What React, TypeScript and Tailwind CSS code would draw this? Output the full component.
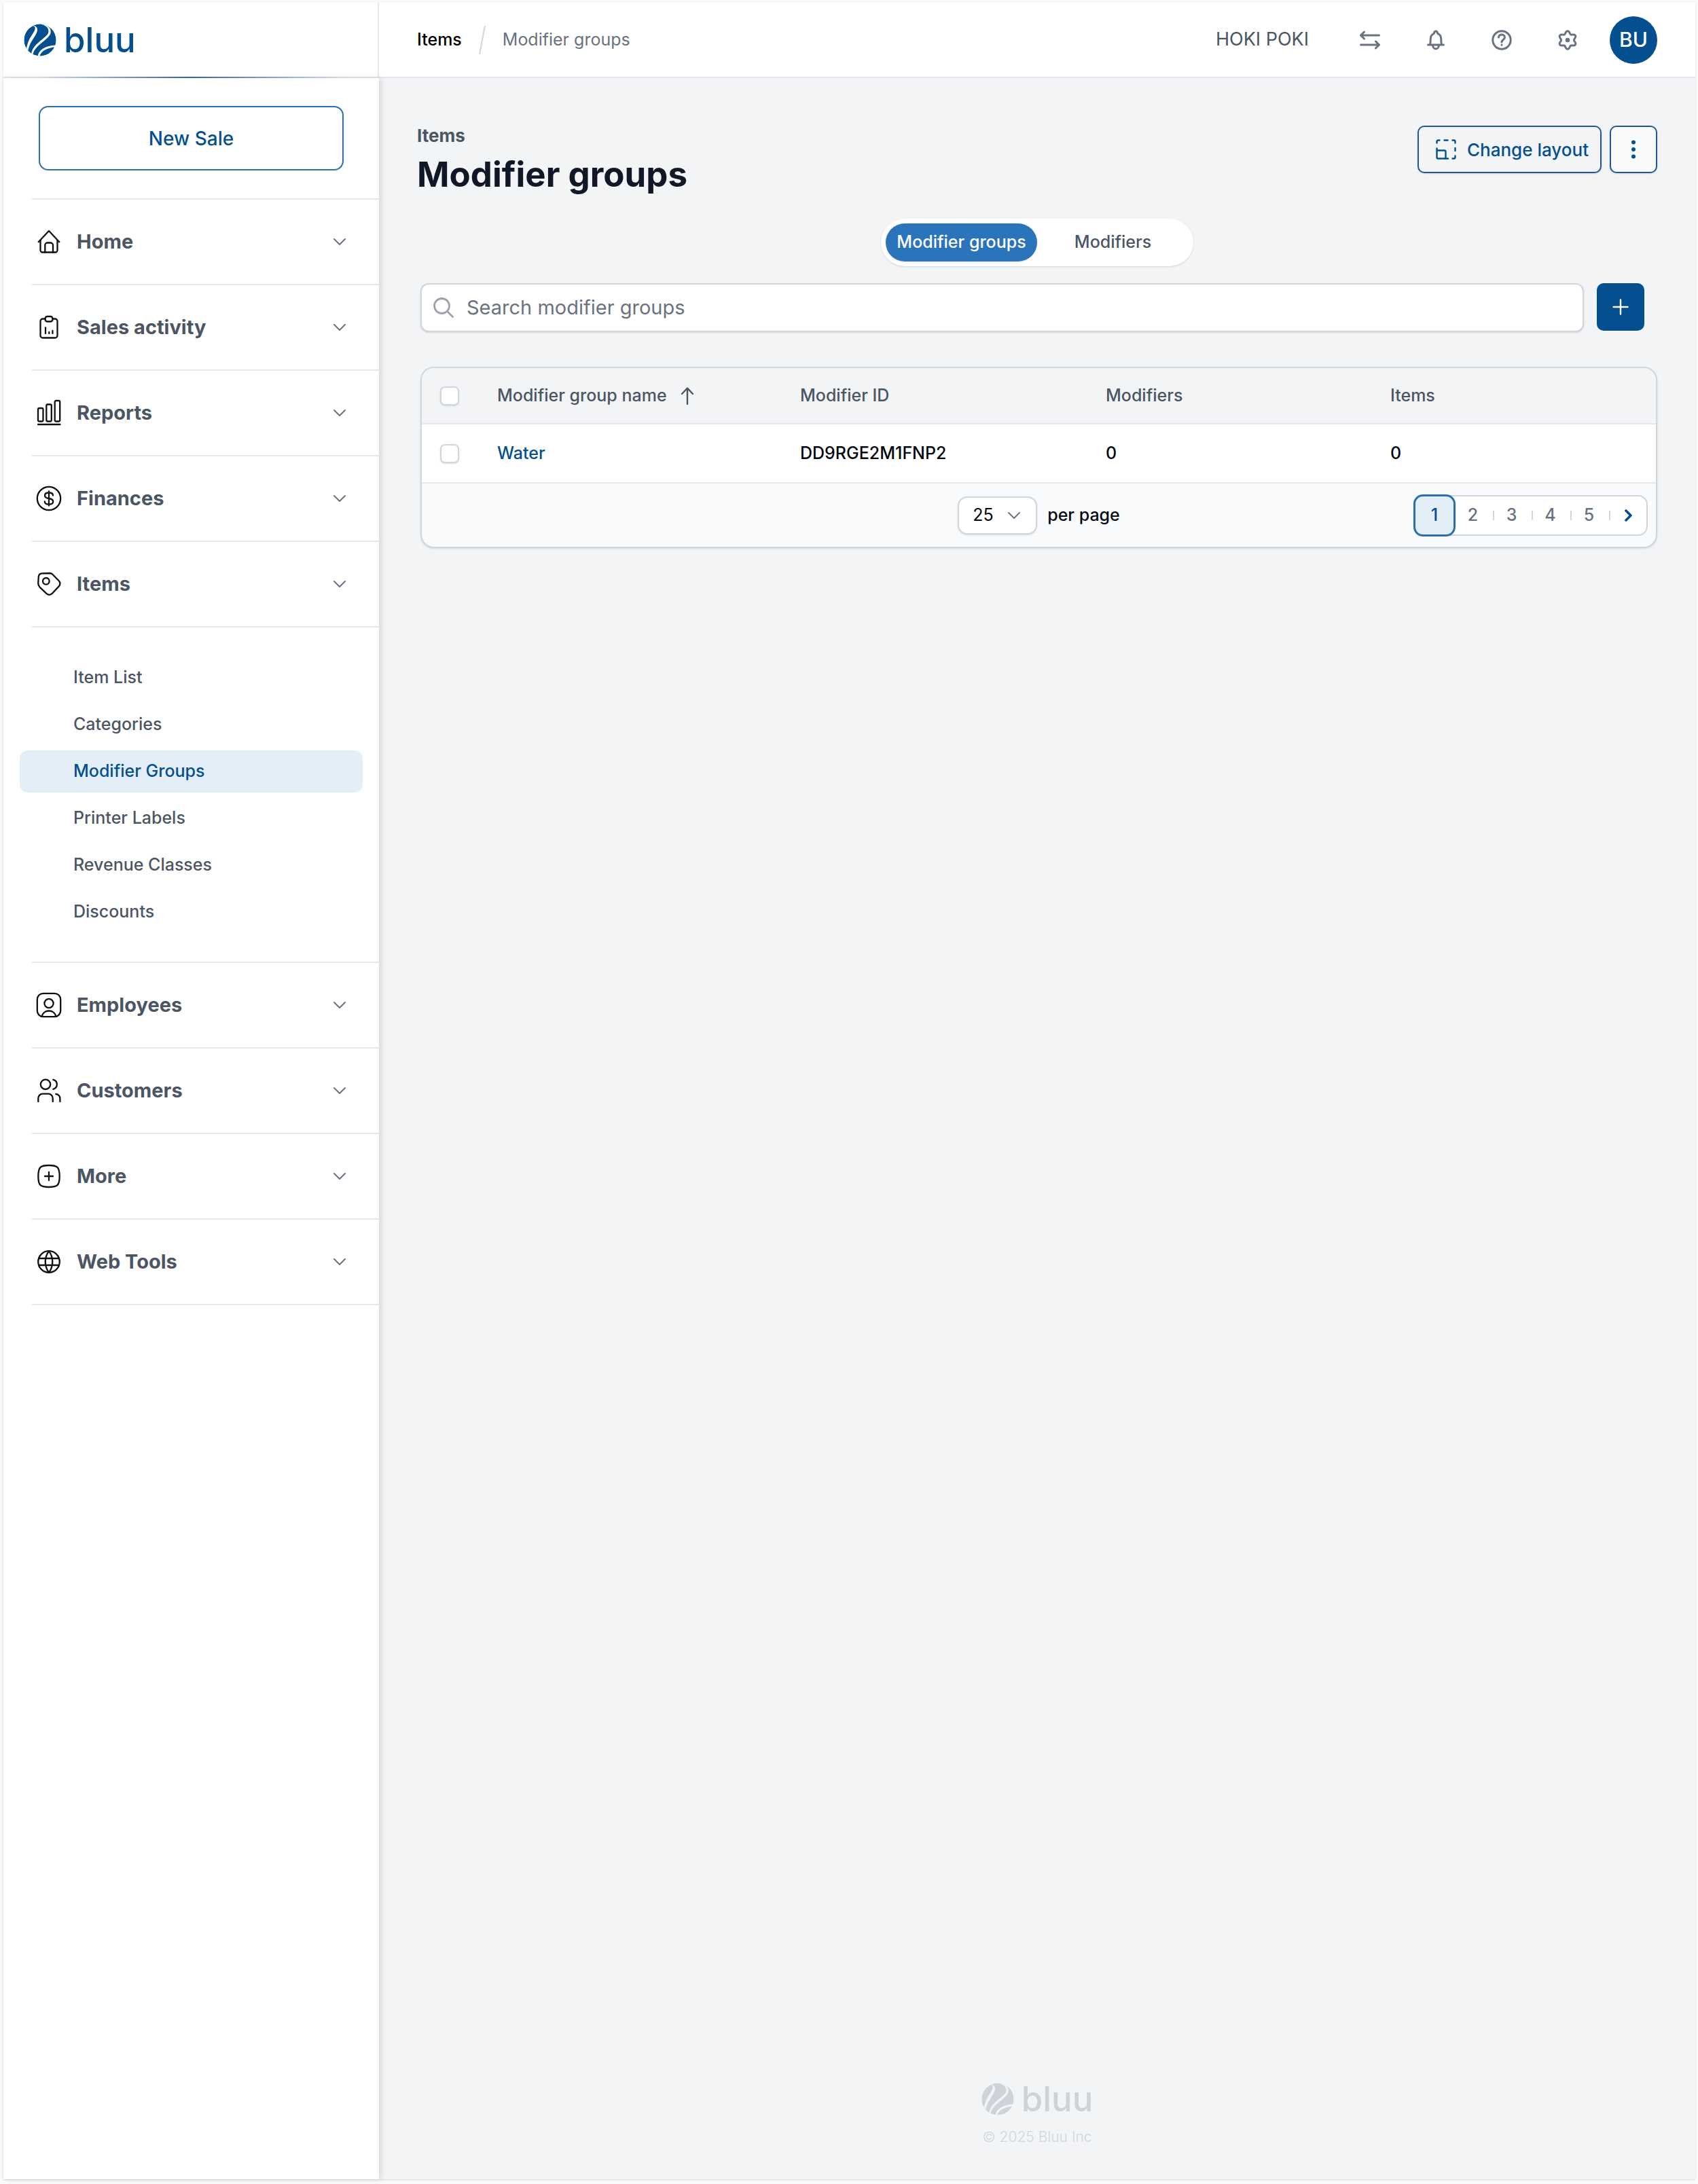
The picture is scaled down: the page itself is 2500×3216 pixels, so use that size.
import type { ReactNode } from "react";

interface NavSection {
  label: string;
  icon: ReactNode;
  children?: { label: string; active?: boolean }[];
}

const NAV: NavSection[] = [
  {
    label: "Home",
    icon: (
      <>
        <path d="M2.7 18.2L18 2l15.3 16.2" />
        <path d="M5.5 16v14.5a3 3 0 0 0 3 3h19a3 3 0 0 0 3-3V16" />
        <path d="M12.3 33.5V23a3.5 3.5 0 0 1 3.5-3.5h4.6A3.5 3.5 0 0 1 24 23v10.5" />
      </>
    ),
  },
  {
    label: "Sales activity",
    icon: (
      <>
        <path d="M12.5 5.5H9A3.5 3.5 0 0 0 5.5 9v21A3.5 3.5 0 0 0 9 33.500h18a3.5 3.5 0 0 0 3.5-3.5V9A3.5 3.5 0 0 0 27 5.5h-3.5" />
        <rect x="12.5" y="2" width="11" height="7.5" rx="3.2" />
        <path d="M13 18.5V27M18.3 25v2M23.4 23v4" />
      </>
    ),
  },
  {
    label: "Reports",
    icon: (
      <>
        <rect x="2" y="11" width="7.5" height="19.5" rx="2" />
        <rect x="14.3" y="5.5" width="7.5" height="25" rx="2" />
        <rect x="26.7" y="0" width="7.5" height="30.5" rx="2" />
        <path d="M2 35h32.5" />
      </>
    ),
  },
  {
    label: "Finances",
    icon: (
      <>
        <circle cx="18" cy="18" r="17.2" />
        <path d="M18 7.5v21M24 13.5c0-2.5-2.3-4-6-4s-6 1.5-6 4.2c0 2.8 2.5 3.7 6 4.3s6.2 1.6 6.2 4.4c0 2.6-2.5 4.2-6.2 4.2s-6.2-1.6-6.2-4.2" />
      </>
    ),
  },
  {
    label: "Items",
    icon: (
      <>
        <path d="M7.5 2.4L19 2q2.500 0 4.3 1.7l9.4 9.5q3.6 4 0 8.2L22.5 32.2q-4 3.3-8 0L4.3 22.3Q2.300 20 2.2 17l.6-10Q3.2 3 7.5 2.4z" />
        <circle cx="13.8" cy="13.8" r="4.8" />
      </>
    ),
    children: [
      { label: "Item List" },
      { label: "Categories" },
      { label: "Modifier Groups", active: true },
      { label: "Printer Labels" },
      { label: "Revenue Classes" },
      { label: "Discounts" },
    ],
  },
  {
    label: "Employees",
    icon: (
      <>
        <rect x="0.8" y="0.8" width="34.4" height="34.4" rx="9" />
        <circle cx="18" cy="15.5" r="6.6" />
        <path d="M7.8 34.5C8.8 29.5 13 26.5 18 26.5s9.2 3 10.2 8" />
      </>
    ),
  },
  {
    label: "Customers",
    icon: (
      <>
        <circle cx="13" cy="8.8" r="7.2" />
        <path d="M24.3 1.8a7.2 7.2 0 0 1 0 14" />
        <path d="M2.3 34.2v-5a6.5 6.5 0 0 1 6.5-6.5h8.4a6.5 6.5 0 0 1 6.5 6.5v5" />
        <path d="M28.4 23a6.5 6.5 0 0 1 6 6.5v4.7" />
      </>
    ),
  },
  {
    label: "More",
    icon: (
      <>
        <path d="M2.3 18C2.3 5 5 2 18 2s15.7 3 15.7 16S31 34 18 34 2.3 31 2.3 18z" />
        <path d="M18 12v12M12 18h12" />
      </>
    ),
  },
  {
    label: "Web Tools",
    icon: (
      <>
        <circle cx="18" cy="18" r="15.8" />
        <path d="M18 2.2c-7 9.5-7 22 0 31.6M18 2.2c7 9.5 7 22 0 31.6M3.2 13h29.6M3.2 23h29.6" />
      </>
    ),
  },
];

const COLUMNS = ["Modifier ID", "Modifiers", "Items"];

const ROWS = [{ name: "Water", id: "DD9RGE2M1FNP2", modifiers: 0, items: 0 }];

const PAGES = [2, 3, 4, 5];

// six-lobed outline of the settings icon
const GEAR = Array.from({ length: 90 }, (_, i) => {
  const a = (i / 90) * Math.PI * 2;
  const r = 11.3 + 2 * Math.cos(6 * a);
  return `${(15 + r * Math.sin(a)).toFixed(2)},${(15 - r * Math.cos(a)).toFixed(2)}`;
}).join(" ");

function Logo({ className }: { className: string }) {
  return (
    <div className={`flex items-center gap-[11px] ${className}`}>
      <svg width="48" height="48" viewBox="0 0 144 144" fill="none" aria-hidden="true">
        <defs>
          <mask id="ball">
            <circle cx="72" cy="72" r="71" fill="#fff" />
            <path d="M32 11C44 8 53 12 49 26C45 42 20 62 12 108L19 118C26 78 58 52 60 28C61 12 48 5 32 11z" fill="#000" />
            <path d="M74 1C98 8 112 18 109 38C104 62 40 84 33 134L40 138C46 94 112 72 119 40C122 20 108 6 74 1z" fill="#000" />
            <path d="M143 95C100 94 66 114 62 142L70 144C76 120 104 106 141 103z" fill="#000" />
          </mask>
        </defs>
        <circle cx="72" cy="72" r="71" fill="currentColor" mask="url(#ball)" />
      </svg>
      <span className="text-[51px] leading-[48px] font-medium">bluu</span>
    </div>
  );
}

function Chevron({ className }: { className: string }) {
  return (
    <svg width="20" height="12" viewBox="0 0 20 12" fill="none" stroke="currentColor" strokeWidth="2" strokeLinecap="round" strokeLinejoin="round" className={className} aria-hidden="true">
      <path d="M2 2l8 8 8-8" />
    </svg>
  );
}

function HeaderButton({ label, children }: { label: string; children: ReactNode }) {
  return (
    <button type="button" aria-label={label} className="flex size-[70px] items-center justify-center text-gray-500">
      <svg width="30" height="30" viewBox="0 0 30 30" fill="none" stroke="currentColor" strokeWidth="3" strokeLinecap="round" strokeLinejoin="round">
        {children}
      </svg>
    </button>
  );
}

function Sidebar() {
  return (
    <aside className="flex w-[553px] shrink-0 flex-col">
      <div className="flex h-[111px] items-center border-r-2 border-b-2 border-gray-200 pl-[30px]">
        <Logo className="text-[#034f8f]" />
      </div>
      <div className="relative z-10 flex-1 bg-white shadow-[3px_0_8px_rgba(0,0,0,0.12)]">
        <div className="absolute inset-x-[50px] -top-[2px] h-[2px] bg-gradient-to-r from-transparent via-[#3563ad] to-transparent" />
        <div className="px-[52px] py-[41px]">
          <button type="button" className="h-[95px] w-full rounded-[14px] border-2 border-[#2c6fb0] text-[28px] font-medium text-[#034f8f]">
            New Sale
          </button>
        </div>
        <nav className="ml-[42px] border-t-2 border-gray-200">
          {NAV.map((section) => (
            <div key={section.label}>
              <button type="button" className="flex h-[126px] w-full items-center border-b-2 border-gray-200 pr-[48px] pl-[7px] text-left">
                <svg width="36" height="36" viewBox="0 0 36 36" fill="none" stroke="#111" strokeWidth="2.3" strokeLinecap="round" strokeLinejoin="round" className="overflow-visible" aria-hidden="true">
                  {section.icon}
                </svg>
                <span className="ml-[23px] flex-1 text-[29px] font-bold text-[#4b5563]">{section.label}</span>
                <Chevron className="text-gray-500" />
              </button>
              {section.children && (
                <ul className="flex flex-col gap-[7px] border-b-2 border-gray-200 pt-[43px] pb-[42px]">
                  {section.children.map((item) => (
                    <li key={item.label} className="-ml-[18px] pr-6">
                      <a
                        href="#"
                        className={`flex h-[62px] items-center rounded-[12px] pl-[79px] text-[25px] font-medium ${
                          item.active ? "bg-[#e4eef8] text-[#034f8f]" : "text-[#4b5563]"
                        }`}
                      >
                        {item.label}
                      </a>
                    </li>
                  ))}
                </ul>
              )}
            </div>
          ))}
        </nav>
      </div>
    </aside>
  );
}

function TopBar() {
  return (
    <header className="flex h-[111px] items-center justify-between border-b-2 border-gray-200 bg-white px-[56px]">
      <nav aria-label="Breadcrumb" className="flex items-center text-[25px] font-medium">
        <a href="#" className="text-black">
          Items
        </a>
        <svg width="10" height="42" viewBox="0 0 10 42" fill="none" stroke="#d1d5db" strokeWidth="2" className="mx-[25px]" aria-hidden="true">
          <path d="M9 0L1 42" />
        </svg>
        <span className="font-normal text-gray-500">Modifier groups</span>
      </nav>
      <div className="flex items-center gap-[27px]">
        <span className="mr-7 text-[27px] text-[#4b5563]">HOKI POKI</span>
        <HeaderButton label="Switch account">
          <path d="M28.500 8H2M6.5 3l-5 5 5 5M1.500 22H28M23.5 17l5 5-5 5" />
        </HeaderButton>
        <HeaderButton label="Notifications">
          <path d="M3.5 22h23M6.3 22c.9-2 .9-4.5.9-8.5 0-4.5 2.3-7 5.2-8.2C12.500 3 13.5 2 15 2s2.500 1 2.6 3.3c2.9 1.2 5.2 3.7 5.2 8.2 0 4 0 6.5.9 8.5M10.5 22.5a4.5 5.5 0 0 0 9 0" />
        </HeaderButton>
        <HeaderButton label="Help">
          <circle cx="15" cy="15" r="13.2" />
          <path d="M10.5 11c.3-2.5 2-4 4.5-4s4.5 1.5 4.5 4c0 3.5-4.5 3.5-4.5 7M15 22v.2" />
        </HeaderButton>
        <HeaderButton label="Settings">
          <polygon points={GEAR} />
          <circle cx="15" cy="15" r="1.8" fill="currentColor" />
        </HeaderButton>
        <button type="button" className="size-[70px] rounded-full bg-[#034f8f] text-[30px] font-medium text-white">
          BU
        </button>
      </div>
    </header>
  );
}

function Checkbox({ label }: { label: string }) {
  return (
    <input
      type="checkbox"
      aria-label={label}
      className="block size-[28px] appearance-none rounded-[7px] border-2 border-gray-300 bg-white shadow-sm checked:bg-[#034f8f]"
    />
  );
}

function ModifierTable() {
  return (
    <section className="mt-[51px] ml-[5px] overflow-hidden rounded-[20px] border-2 border-gray-300 bg-[#f9fafc] shadow">
      <table className="w-full table-fixed border-collapse text-left text-[25px]">
        <colgroup>
          <col className="w-[111px]" />
          <col className="w-[446px]" />
          <col className="w-[450px]" />
          <col className="w-[419px]" />
          <col />
        </colgroup>
        <thead>
          <tr className="h-[82px] border-b-2 border-gray-200 bg-gray-100 text-[#4b5563]">
            <th className="pl-[27px]">
              <Checkbox label="Select all modifier groups" />
            </th>
            <th className="font-medium">
              <button type="button" className="flex items-center gap-5">
                Modifier group name
                <svg width="20" height="26" viewBox="0 0 20 26" fill="none" stroke="currentColor" strokeWidth="2.4" strokeLinecap="round" strokeLinejoin="round" aria-hidden="true">
                  <path d="M10 25V2M2 10l8-8.500 8 8.500" />
                </svg>
              </button>
            </th>
            {COLUMNS.map((column) => (
              <th key={column} className="font-medium">
                {column}
              </th>
            ))}
          </tr>
        </thead>
        <tbody>
          {ROWS.map((row) => (
            <tr key={row.id} className="h-[87px] border-b-2 border-gray-200 bg-white font-medium text-gray-950">
              <td className="pl-[27px]">
                <Checkbox label={`Select ${row.name}`} />
              </td>
              <td>
                <a href="#" className="text-[#034f8f]">
                  {row.name}
                </a>
              </td>
              <td>{row.id}</td>
              <td>{row.modifiers}</td>
              <td>{row.items}</td>
            </tr>
          ))}
        </tbody>
      </table>
      <div className="grid h-[93px] grid-cols-[1fr_auto_1fr] items-center text-[25px] font-medium text-gray-950">
        <label className="col-start-2 flex items-center gap-[15px]">
          <span className="relative flex items-center">
            <select className="h-[56px] w-[117px] appearance-none rounded-[14px] border-2 border-gray-300 bg-white pl-5 font-normal shadow-sm">
              <option>25</option>
              <option>50</option>
              <option>100</option>
            </select>
            <Chevron className="pointer-events-none absolute right-6 text-gray-500" />
          </span>
          per page
        </label>
        <div className="mr-3 ml-auto flex h-[60px] items-center rounded-[14px] border-2 border-gray-300 bg-white text-gray-500">
          <button type="button" aria-current="page" className="-ml-[2px] h-[62px] w-[62px] rounded-[14px] border-3 border-[#2c6fb0] bg-[#e4eef8] text-[#034f8f]">
            1
          </button>
          {PAGES.map((page) => (
            <div key={page} className="flex items-center">
              <button type="button" className="h-[56px] w-[55px] pr-[4px]">
                {page}
              </button>
              <span className="h-[14px] w-[2px] bg-gray-300" />
            </div>
          ))}
          <button type="button" aria-label="Next page" className="flex h-[56px] w-[53px] items-center justify-center text-[#034f8f]">
            <svg width="12" height="18" viewBox="0 0 12 18" fill="none" stroke="currentColor" strokeWidth="3.6" strokeLinecap="round" strokeLinejoin="round">
              <path d="M2 2l7 7-7 7" />
            </svg>
          </button>
        </div>
      </div>
    </section>
  );
}

export default function App() {
  return (
    <div className="flex min-h-screen bg-[#fafafa] pt-1 pr-1 pb-[7px] pl-[5px] font-['Inter',sans-serif]">
      <div className="flex flex-1 bg-white shadow">
        <Sidebar />
        <div className="flex flex-1 flex-col bg-gray-100">
          <TopBar />
          <main className="flex-1 px-[56px] pt-[70px]">
            <div className="flex items-start justify-between">
              <div>
                <p className="text-[26px] leading-[30px] font-bold text-[#4b5563]">Items</p>
                <h1 className="mt-2 text-[51px] leading-[68px] font-bold text-gray-900">Modifier groups</h1>
              </div>
              <div className="flex gap-3">
                <button type="button" className="flex h-[70px] items-center gap-4 rounded-[10px] border-2 border-[#1d5a92] pr-[17px] pl-[25px] text-[26px] font-medium text-[#034f8f] shadow-sm">
                  <svg width="30" height="30" viewBox="0 0 30 30" fill="none" stroke="currentColor" strokeWidth="2.4" strokeLinecap="round" strokeLinejoin="round" aria-hidden="true">
                    <path d="M1.5 5.5v-2a2 2 0 0 1 2-2h2M12.5 1.5h5M24.5 1.5h2a2 2 0 0 1 2 2v2M28.5 13v4M28.5 24.5v2a2 2 0 0 1-2 2h-2" />
                    <path d="M1.5 13.5v13a2 2 0 0 0 2 2H18M1.5 16.5h11a2 2 0 0 1 2 2v10" />
                  </svg>
                  Change layout
                </button>
                <button type="button" aria-label="More actions" className="flex size-[70px] items-center justify-center rounded-[10px] border-2 border-[#1d5a92] bg-gray-50 text-[#034f8f] shadow-sm">
                  <svg width="6" height="28" viewBox="0 0 6 28" fill="currentColor">
                    <circle cx="3" cy="3.5" r="3" />
                    <circle cx="3" cy="14" r="3" />
                    <circle cx="3" cy="24.5" r="3" />
                  </svg>
                </button>
              </div>
            </div>

            <div role="tablist" className="mx-auto mt-[31px] flex w-fit rounded-full bg-white p-[7px] text-[25px] font-medium shadow-sm">
              <button type="button" role="tab" aria-selected="true" className="h-[56px] w-[223px] rounded-full bg-[#2a74bc] text-white shadow-sm">
                Modifier groups
              </button>
              <button type="button" role="tab" aria-selected="false" className="h-[56px] w-[223px] rounded-full text-[#4b5563]">
                Modifiers
              </button>
            </div>

            <div className="mt-[25px] flex items-start gap-[19px] pr-[19px] pl-[5px]">
              <label className="flex h-[72px] flex-1 items-center gap-[19px] rounded-[12px] border-2 border-gray-300 bg-white pl-[17px] shadow-sm">
                <svg width="30" height="30" viewBox="0 0 30 30" fill="none" stroke="#9ca3af" strokeWidth="2.8" strokeLinecap="round" aria-hidden="true">
                  <circle cx="12.5" cy="12.5" r="11" />
                  <path d="M20.5 20.5l8 8" />
                </svg>
                <input type="search" aria-label="Search modifier groups" placeholder="Search modifier groups" className="flex-1 bg-transparent text-[29px] outline-none placeholder:text-gray-500" />
              </label>
              <button type="button" aria-label="Add modifier group" className="flex size-[70px] items-center justify-center rounded-[10px] bg-[#034f8f] text-white">
                <svg width="24" height="24" viewBox="0 0 24 24" fill="none" stroke="currentColor" strokeWidth="2.4" strokeLinecap="round">
                  <path d="M12 1.5v21M1.5 12h21" />
                </svg>
              </button>
            </div>

            <ModifierTable />
          </main>
          <footer className="flex flex-col items-center pb-[47px]">
            <Logo className="text-[#cfd3d9]" />
            <p className="mt-[17px] text-[21px] leading-[30px] font-light text-gray-300">© 2025 Bluu Inc</p>
          </footer>
        </div>
      </div>
    </div>
  );
}
